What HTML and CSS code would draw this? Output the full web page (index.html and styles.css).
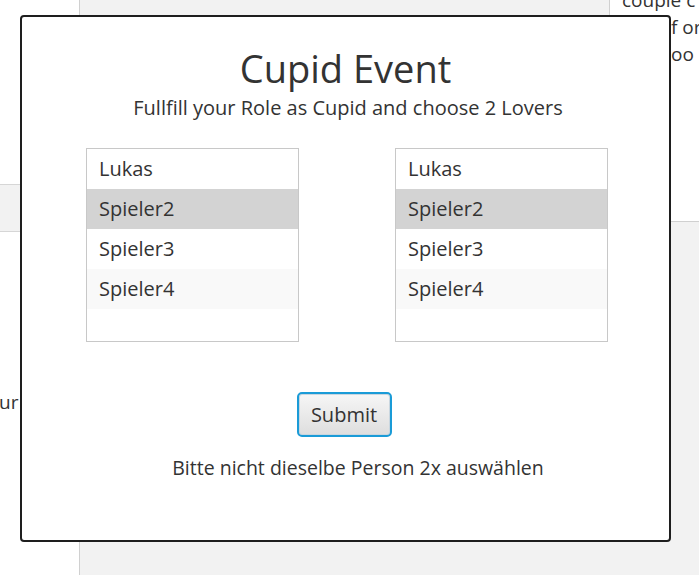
FILE: index.html
```html
<!DOCTYPE html>
<html>
<head>
<meta charset="utf-8">
<link rel="stylesheet" href="styles.css">
</head>
<body>
<div class="app">
  <aside class="left">
    <div class="left-bar"></div>
    <div class="left-text">ur</div>
  </aside>
  <main class="center"></main>
  <aside class="right">
    <div class="right-panel">
      <p class="line l1">couple c</p>
      <p class="line l2">f or</p>
      <p class="line l3">oo</p>
    </div>
  </aside>
</div>

<div class="dialog">
  <h1 class="title">Cupid Event</h1>
  <p class="subtitle">Fullfill your Role as Cupid and choose 2 Lovers</p>
  <div class="lists">
    <ul class="list">
      <li class="row">Lukas</li>
      <li class="row sel">Spieler2</li>
      <li class="row">Spieler3</li>
      <li class="row odd">Spieler4</li>
    </ul>
    <ul class="list">
      <li class="row">Lukas</li>
      <li class="row sel">Spieler2</li>
      <li class="row">Spieler3</li>
      <li class="row odd">Spieler4</li>
    </ul>
  </div>
  <button class="submit">Submit</button>
  <p class="hint">Bitte nicht dieselbe Person 2x auswählen</p>
</div>
</body>
</html>
```
FILE: styles.css
```css
html, body {
  margin: 0;
  padding: 0;
  width: 699px;
  height: 575px;
  overflow: hidden;
  background: #f2f2f2;
  font-family: "Open Sans", "Noto Sans", sans-serif;
  color: #333;
}

.app {
  display: grid;
  grid-template-columns: 80px 530px 89px;
  height: 575px;
}

.left {
  background: #fff;
  border-right: 1px solid #d0d0d0;
  display: flex;
  flex-direction: column;
}

.left-bar {
  margin-top: 184px;
  height: 46px;
  background: #f2f2f2;
  border-top: 1px solid #d6d6d6;
  border-bottom: 1px solid #d6d6d6;
}

.left-text {
  margin-top: 158px;
  font-size: 19px;
  line-height: 24px;
  margin-left: -1px;
}

.center {
  background: #f2f2f2;
}

.right {
  display: flex;
  flex-direction: column;
}

.right-panel {
  height: 222px;
  background: #fff;
  border-left: 1px solid #d0d0d0;
  border-bottom: 1px solid #d0d0d0;
  padding: 0 0 0 12px;
  box-sizing: border-box;
  margin-left: -1px;
}

.line {
  margin: 0;
  font-size: 19px;
  line-height: 27px;
  white-space: nowrap;
}

.l1 { margin-top: -13px; }
.l2 { padding-left: 49px; }
.l3 { padding-left: 49px; }

.dialog {
  position: absolute;
  left: 20px;
  top: 15px;
  width: 651px;
  height: 527px;
  box-sizing: border-box;
  background: #fff;
  border: 2px solid #1e1e1e;
  border-radius: 4px;
  display: flex;
  flex-direction: column;
  align-items: center;
}

.title {
  margin: 27px 0 0;
  font-size: 38px;
  font-weight: 400;
  line-height: 48px;
}

.subtitle {
  margin: 3px 0 0 5px;
  font-size: 20px;
  line-height: 26px;
}

.lists {
  display: flex;
  gap: 96px;
  margin-top: 27px;
  margin-left: 3px;
}

.list {
  list-style: none;
  margin: 0;
  padding: 0;
  width: 213px;
  height: 194px;
  box-sizing: border-box;
  border: 1px solid #c8c8c8;
  background: #fff;
}

.row {
  height: 40px;
  line-height: 40px;
  padding-left: 12px;
  font-size: 20px;
}

.row.sel { background: #d3d3d3; }
.row.odd { background: #f9f9f9; }

.submit {
  margin-top: 50px;
  margin-left: -3px;
  width: 95px;
  height: 45px;
  box-sizing: border-box;
  border: 2px solid #1a9bd7;
  border-radius: 5px;
  background: linear-gradient(#f6f6f6, #dedede);
  box-shadow: inset 0 0 0 1px #c9d6df;
  font-family: inherit;
  font-size: 20px;
  color: #333;
  padding: 0;
}

.hint {
  margin: 19px 0 0 25px;
  font-size: 19.5px;
  line-height: 24px;
}
```
